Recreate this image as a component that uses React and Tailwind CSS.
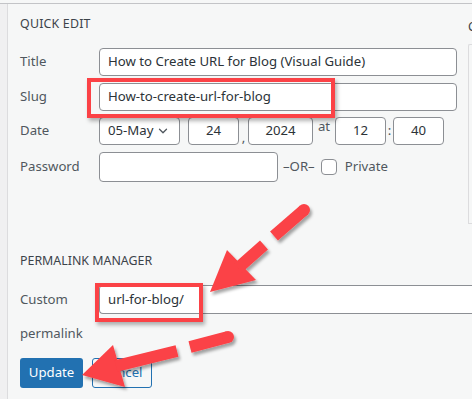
import { ChevronDown } from 'lucide-react';

const RED = '#fb4246';

function Field({ className = '', children, center = false }) {
  return (
    <div
      className={`h-[28px] bg-white border border-[#8c8f94] rounded-[4px] flex items-center whitespace-nowrap text-[13.2px] text-[#2c3338] ${center ? 'justify-center' : 'pl-[8px]'} ${className}`}
    >
      {children}
    </div>
  );
}

function Row({ label, children, className = '' }) {
  return (
    <div className={`flex items-center ${className}`}>
      <span className="w-[79px] shrink-0 text-[13.2px] text-[#50575e]">{label}</span>
      {children}
    </div>
  );
}

function Arrows() {
  return (
    <svg className="absolute inset-0 pointer-events-none" width="472" height="399" viewBox="0 0 472 399">
      <defs>
        <filter id="sh" x="-20%" y="-20%" width="140%" height="140%">
          <feDropShadow dx="2" dy="3" stdDeviation="1.6" floodColor="#000" floodOpacity="0.35" />
        </filter>
      </defs>
      <g filter="url(#sh)" fill={RED} stroke={RED}>
        {/* arrow to custom permalink */}
        <polygon points="210,292 227,250 256,280" stroke="none" />
        <line x1="238" y1="268" x2="264" y2="245" strokeWidth="12" />
        <line x1="274" y1="236" x2="304" y2="210" strokeWidth="12" />
        <circle cx="304" cy="210" r="6" stroke="none" />
        {/* arrow to update button */}
        <polygon points="82,375 113,345 125,387" stroke="none" />
        <line x1="116" y1="366" x2="177" y2="351" strokeWidth="12" />
        <line x1="190" y1="347" x2="228" y2="337" strokeWidth="12" />
        <circle cx="228" cy="337" r="6" stroke="none" />
      </g>
    </svg>
  );
}

export default function App() {
  return (
    <div className="relative w-[472px] h-[399px] overflow-hidden bg-[#f6f7f7] font-['Noto_Sans','Open_Sans',sans-serif]">
      <div className="mt-[3px] border-t border-[#c3c4c7] flex h-[396px]">
        <div className="w-[8px] shrink-0 bg-[#f0f0f1] border-r border-[#dcdcde]" />
        <div className="flex-1 flex flex-col">
          <div className="flex">
            {/* quick edit fieldset */}
            <div className="w-[460px] shrink-0 pl-[12px] pr-[11px]">
              <div className="pt-[10px] text-[12.4px] leading-[20px] text-[#3c434a] uppercase tracking-[0.2px]">Quick Edit</div>
              <Row label="Title" className="mt-[14px]">
                <Field className="flex-1">How to Create URL for Blog (Visual Guide)</Field>
              </Row>
              <Row label="Slug" className="mt-[7px]">
                <Field className="flex-1">How-to-create-url-for-blog</Field>
              </Row>
              <Row label="Date" className="mt-[6px]">
                <Field className="w-[81px] justify-between pr-[9px]">
                  <span>05-May</span>
                  <ChevronDown size={14} strokeWidth={2.2} className="text-[#50575e]" />
                </Field>
                <Field center className="w-[51px] ml-[8px]">24</Field>
                <span className="w-[9px] text-center text-[13.2px] text-[#50575e] self-end leading-[16px]">,</span>
                <Field center className="w-[65px]">2024</Field>
                <span className="w-[22px] text-center text-[13.2px] text-[#50575e] self-start leading-[18px]">at</span>
                <Field center className="w-[51px]">12</Field>
                <span className="w-[7px] text-center text-[13.2px] text-[#50575e]">:</span>
                <Field center className="w-[51px]">40</Field>
              </Row>
              <Row label="Password" className="mt-[7px]">
                <Field className="w-[179px] h-[30px]" />
                <span className="ml-[5px] text-[13.2px] text-[#50575e]">–OR–</span>
                <span className="ml-[6px] w-[16px] h-[16px] bg-white border border-[#8c8f94] rounded-[4px]" />
                <span className="ml-[8px] text-[13.2px] text-[#50575e]">Private</span>
              </Row>
            </div>
            {/* categories column, cut off at the right edge */}
            <div className="flex-1 pt-[13px]">
              <div className="text-[12.4px] leading-[20px] text-[#3c434a] uppercase whitespace-nowrap">Categories</div>
              <div className="mt-[7px] h-[180px] border-l border-t border-b border-[#dcdcde] rounded-tl-[2px] bg-[#f6f7f7]" />
            </div>
          </div>

          {/* permalink manager */}
          <div className="pl-[12px]">
            <div className="mt-[27px] text-[12.4px] leading-[20px] text-[#3c434a] uppercase">Permalink Manager</div>
            <div className="mt-[14px] flex items-start">
              <span className="w-[79px] shrink-0 text-[13.2px] leading-[20px] text-[#50575e] pt-[4px]">
                Custom
                <span className="block mt-[14px]">permalink</span>
              </span>
              <div className="flex-1 h-[29px] bg-white border-y border-l border-[#8c8f94] rounded-l-[4px] flex items-center pl-[8px] text-[13.2px] text-[#2c3338]">
                url-for-blog/
              </div>
            </div>
            <div className="mt-[15px] flex gap-[9px]">
              <button className="h-[30px] w-[63px] rounded-[3px] bg-[#2271b1] text-white text-[13.2px]">Update</button>
              <button className="h-[30px] w-[60px] rounded-[3px] border border-[#2271b1] text-[#2271b1] text-[13.2px]">Cancel</button>
            </div>
          </div>
        </div>
      </div>

      {/* annotation boxes */}
      <div className="absolute left-[87px] top-[78px] w-[248px] h-[40px] border-[4px] border-[#fb4246] shadow-[2px_3px_4px_rgba(0,0,0,0.3)]" />
      <div className="absolute left-[95px] top-[283px] w-[108px] h-[39px] border-[4px] border-[#fb4246] shadow-[2px_3px_4px_rgba(0,0,0,0.3)]" />
      <Arrows />
    </div>
  );
}
